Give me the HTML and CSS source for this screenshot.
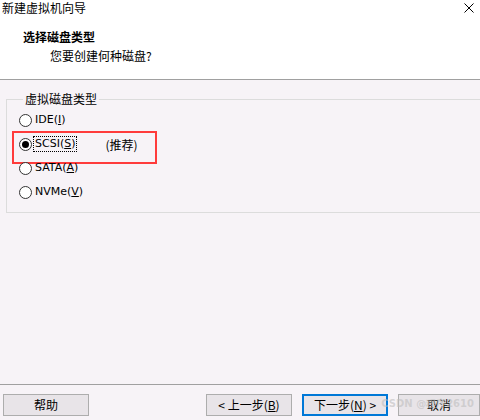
FILE: index.html
```html
<!DOCTYPE html>
<html lang="zh">
<head>
<meta charset="utf-8">
<link rel="stylesheet" href="styles.css">
</head>
<body>
<div class="win">
  <div class="top">
    <div class="titlebar">
      <span class="title">新建虚拟机向导</span>
      <svg class="close" width="10" height="10" viewBox="0 0 10 10"><path d="M0.5 0.5L9.5 9.5M9.5 0.5L0.5 9.5" stroke="#000" stroke-width="1" fill="none"/></svg>
    </div>
    <div class="head">
      <div class="h1">选择磁盘类型</div>
      <div class="h2">您要创建何种磁盘?</div>
    </div>
  </div>
  <div class="main">
    <fieldset class="group">
      <legend class="legend">虚拟磁盘类型</legend>
      <div class="opt"><span class="radio"></span><span class="lbl">IDE(<u>I</u>)</span></div>
      <div class="opt sel"><span class="radio on"></span><span class="lbl focus">SCSI(<u>S</u>)</span><span class="rec">(推荐)</span></div>
      <div class="opt"><span class="radio"></span><span class="lbl">SATA(<u>A</u>)</span></div>
      <div class="opt"><span class="radio"></span><span class="lbl">NVMe(<u>V</u>)</span></div>
    </fieldset>
  </div>
  <div class="footer">
    <button class="btn help">帮助</button>
    <div class="spacer"></div>
    <button class="btn back">&lt; 上一步(<u>B</u>)</button>
    <button class="btn next">下一步(<u>N</u>) &gt;</button>
    <button class="btn cancel">取消</button>
  </div>
  <div class="wm">CSDN @程序2610</div>
</div>
</body>
</html>
```
FILE: styles.css
```css
* { box-sizing: border-box; }
html, body { margin: 0; padding: 0; }
body {
  width: 480px; height: 420px; overflow: hidden;
  font-family: "Noto Sans CJK SC", "DejaVu Sans", sans-serif;
  font-size: 12px; color: #000; background: #f7f3f7;
}
.win { position: relative; display: flex; flex-direction: column; height: 420px; }
.top { background: #fff; height: 80px; border-bottom: 1px solid #a0a0a0; }
.titlebar { display: flex; justify-content: space-between; align-items: center; height: 16px; padding: 0 6px 0 2px; }
.title { line-height: 16px; }
.head { padding: 13px 0 0 23px; }
.h1 { font-weight: bold; line-height: 16px; }
.h2 { padding-left: 27px; line-height: 16px; margin-top: 3px; }
.main { flex: 1; padding: 12px 0 0 6px; }
.group {
  margin: 0; width: 490px; height: 121px;
  border: 1px solid #dcdcdc; padding: 2px 0 0 12px;
}
.legend { padding: 0 2px; margin-left: 4px; line-height: 14px; }
.opt { display: flex; align-items: center; height: 24px; position: relative; }
.radio {
  width: 13px; height: 13px; border: 1px solid #333; border-radius: 50%;
  background: #fff; display: flex; align-items: center; justify-content: center;
  margin-right: 2px;
}
.radio.on::after { content: ""; width: 7px; height: 7px; border-radius: 50%; background: #000; }
.lbl { font-family: "DejaVu Sans", sans-serif; font-size: 11px; line-height: 14px; padding: 0 1px; }
.lbl u { text-underline-offset: 1px; }
.focus { outline: 1px dotted #000; outline-offset: 0; }
.rec { margin-left: 29px; }
.sel::before {
  content: ""; position: absolute; left: -7px; top: -1px; width: 141px; height: 29px;
  border: 2px solid #ff3b3b;
}
.footer {
  height: 36px; border-top: 1px solid #a0a0a0; display: flex; align-items: flex-start;
  padding: 9px 0 0 3px; gap: 10px;
}
.spacer { flex: 1; }
.btn {
  font-family: "Noto Sans CJK SC", "DejaVu Sans", sans-serif; font-size: 12px;
  height: 22px; padding: 0; background: #e8e4e8; border: 1px solid #adadad; color: #000;
  line-height: 18px;
}
.help { width: 86px; }
.back { width: 86px; }
.next { width: 86px; border: 2px solid #0078d7; }
.cancel { width: 82px; }
.wm {
  position: absolute; right: 6px; bottom: 9px; font-family: "DejaVu Sans", sans-serif;
  font-size: 10px; color: rgba(190,190,190,0.6); font-weight: bold;
}
```
